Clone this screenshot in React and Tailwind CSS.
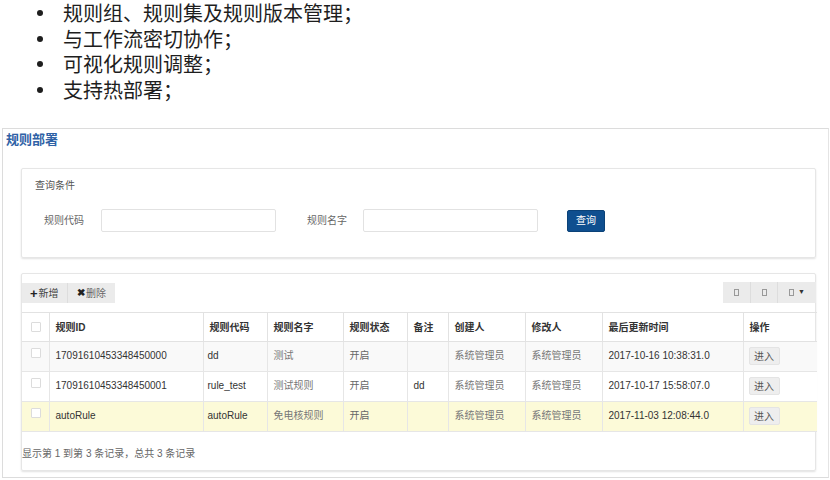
import React from 'react';

const bullets = ['规则组、规则集及规则版本管理；', '与工作流密切协作；', '可视化规则调整；', '支持热部署；'];

const columns = [
  { title: '规则ID', w: 'w-[154px]' },
  { title: '规则代码', w: 'w-[64px]' },
  { title: '规则名字', w: 'w-[76px]' },
  { title: '规则状态', w: 'w-[64px]' },
  { title: '备注', w: 'w-[41px]' },
  { title: '创建人', w: 'w-[77px]' },
  { title: '修改人', w: 'w-[77px]' },
  { title: '最后更新时间', w: 'w-[141px]' },
  { title: '操作', w: 'w-[74px]' },
];

const rows = [
  { id: '17091610453348450000', code: 'dd', name: '测试', status: '开启', note: '', creator: '系统管理员', editor: '系统管理员', time: '2017-10-16 10:38:31.0', bg: 'bg-[#f9f9f9]' },
  { id: '17091610453348450001', code: 'rule_test', name: '测试规则', status: '开启', note: 'dd', creator: '系统管理员', editor: '系统管理员', time: '2017-10-17 15:58:07.0', bg: 'bg-white' },
  { id: 'autoRule', code: 'autoRule', name: '免电核规则', status: '开启', note: '', creator: '系统管理员', editor: '系统管理员', time: '2017-11-03 12:08:44.0', bg: 'bg-[#fcfad8]' },
];

const Check = () => (
  <span className="block w-[10px] h-[10px] border border-[#dcdcdc] bg-white rounded-[1px]" />
);

const Tofu = () => <span className="inline-block w-[5px] h-[7px] border border-[#999]" />;

const App = () => {
  return (
    <div className="w-[830px] h-[480px] bg-white overflow-hidden font-['Liberation_Sans','Noto_Sans_CJK_SC',sans-serif] text-[#333]">
      {/* slide bullets */}
      <ul className="h-[128px]">
        {bullets.map((b) => (
          <li key={b} className="flex items-center h-[25.7px] leading-[25.7px] text-[20px] text-[#1e1e1e] font-['Noto_Sans_CJK_SC',sans-serif]">
            <span className="w-[63px] flex justify-start pl-[37px]">
              <span className="block w-[6px] h-[6px] rounded-full bg-[#1e1e1e]" />
            </span>
            <span>{b}</span>
          </li>
        ))}
      </ul>

      {/* page panel */}
      <div className="ml-[2px] w-[827px] h-[350px] border border-[#dcdcdc] border-r-[#e4e4e4]">
        <div className="h-[39px] pl-[3px] pt-[2px] text-[13px] font-bold text-[#2f62a6] font-['Noto_Sans_CJK_SC',sans-serif] leading-[15px]">
          规则部署
        </div>

        {/* query card */}
        <div className="ml-[18px] w-[795px] h-[90px] border border-[#e6e6e6] rounded-[2px] shadow-[0_1px_2px_rgba(0,0,0,0.12)]">
          <div className="pl-[13px] pt-[11px] text-[10px] text-[#555] leading-[12px]">查询条件</div>
          <div className="flex items-center mt-[17px] h-[23px] text-[10px] text-[#666]">
            <span className="pl-[22px] w-[79px]">规则代码</span>
            <div className="w-[175px] h-[23px] border border-[#e2e2e2] rounded-[2px]" />
            <span className="pl-[31px] w-[87px]">规则名字</span>
            <div className="w-[175px] h-[23px] border border-[#e2e2e2] rounded-[2px]" />
            <button className="ml-[29px] w-[38px] h-[22px] bg-[#0f4f8f] text-white text-[10px] rounded-[2px] border border-[#0b4278]">
              查询
            </button>
          </div>
        </div>

        {/* table card */}
        <div className="ml-[18px] mt-[15px] w-[795px] h-[198px] border border-[#e6e6e6] rounded-[2px] shadow-[0_1px_2px_rgba(0,0,0,0.12)] flex flex-col">
          <div className="flex justify-between items-start mt-[8px]">
            <div className="flex mt-[1px]">
              <button className="flex items-center h-[20px] w-[46px] pl-[8px] bg-[#ebebeb] text-[10px] text-[#444] border-r border-[#dddddd]">
                <span className="text-[13px] font-bold text-[#222] leading-none mr-[1px]">+</span>新增
              </button>
              <button className="flex items-center h-[20px] w-[47px] pl-[9px] bg-[#ebebeb] text-[10px] text-[#666]">
                <span className="text-[10px] font-bold text-[#222] leading-none mr-[1px]">✖</span>删除
              </button>
            </div>
            <div className="flex h-[21px] mr-[-1px] bg-[#ebebeb]">
              <div className="w-[28px] flex items-center justify-center border-r border-[#dddddd]"><Tofu /></div>
              <div className="w-[27px] flex items-center justify-center border-r border-[#dddddd]"><Tofu /></div>
              <div className="w-[38px] flex items-center justify-center gap-[4px]">
                <Tofu />
                <span className="text-[7px] text-[#333]">▼</span>
              </div>
            </div>
          </div>

          <table className="mt-[9px] w-[795px] border-collapse table-fixed text-[10px]">
            <thead>
              <tr className="h-[29px] border-t border-b border-[#e2e2e2]">
                <th className="w-[27px] align-middle pl-[9px]"><Check /></th>
                {columns.map((c) => (
                  <th key={c.title} className={`${c.w} border-l border-[#e2e2e2] text-left font-bold px-[6px] text-[#333] align-middle`}>
                    {c.title}
                  </th>
                ))}
              </tr>
            </thead>
            <tbody>
              {rows.map((r) => (
                <tr key={r.id} className={`h-[30px] border-b border-[#e6e6e6] ${r.bg}`}>
                  <td className="align-top pl-[9px] pt-[6px]"><Check /></td>
                  <td className="align-top border-l border-[#e6e6e6] px-[6px] pt-[6px]">{r.id}</td>
                  <td className="align-top border-l border-[#e6e6e6] px-[4px] pt-[6px]">{r.code}</td>
                  <td className="align-top border-l border-[#e6e6e6] px-[6px] pt-[6px] text-[#777]">{r.name}</td>
                  <td className="align-top border-l border-[#e6e6e6] px-[6px] pt-[6px] text-[#666]">{r.status}</td>
                  <td className="align-top border-l border-[#e6e6e6] px-[6px] pt-[6px]">{r.note}</td>
                  <td className="align-top border-l border-[#e6e6e6] px-[6px] pt-[6px] text-[#777]">{r.creator}</td>
                  <td className="align-top border-l border-[#e6e6e6] px-[6px] pt-[6px] text-[#777]">{r.editor}</td>
                  <td className="align-top border-l border-[#e6e6e6] px-[6px] pt-[6px]">{r.time}</td>
                  <td className="align-top border-l border-[#e6e6e6] pl-[5px] pt-[5px]">
                    <button className="w-[31px] h-[18px] bg-[#eeeeee] text-[10px] text-[#555] rounded-[2px] border border-[#e4e4e4]">
                      进入
                    </button>
                  </td>
                </tr>
              ))}
            </tbody>
          </table>

          <div className="mt-[14px] text-[10px] text-[#666]">显示第 1 到第 3 条记录，总共 3 条记录</div>
        </div>
      </div>
    </div>
  );
};

export default App;
